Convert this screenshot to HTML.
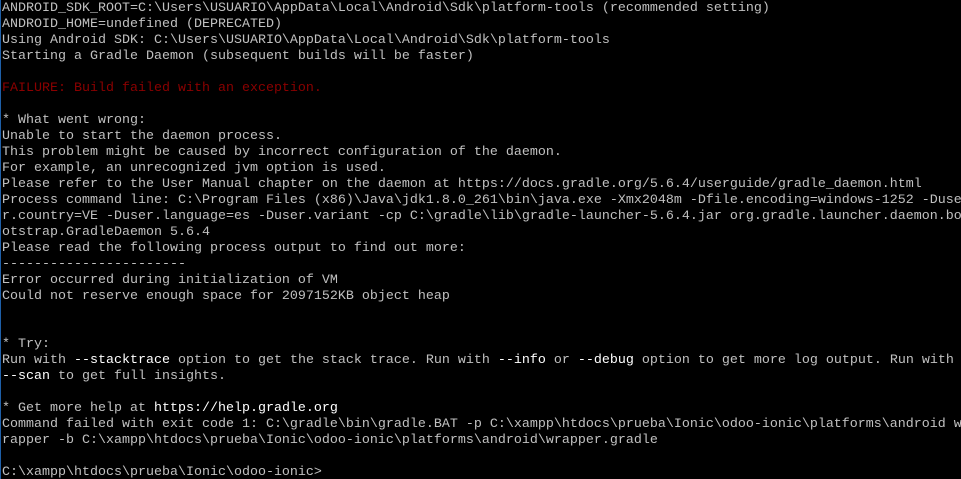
<!DOCTYPE html>
<html><head><meta charset="utf-8"><style>
html,body{margin:0;padding:0;background:#000;width:961px;height:479px;overflow:hidden}
body{border-left:1px solid #1e5fa8;box-sizing:border-box}
pre{margin:0;padding:1px 0 0 1px;font-family:"Liberation Mono",monospace;font-size:13.33px;line-height:16px;color:#c0c0c0;white-space:pre}
.r{color:#8b0000}
b{color:#fff;font-weight:normal}
</style></head><body><pre>ANDROID_SDK_ROOT=C:\Users\USUARIO\AppData\Local\Android\Sdk\platform-tools (recommended setting)
ANDROID_HOME=undefined (DEPRECATED)
Using Android SDK: C:\Users\USUARIO\AppData\Local\Android\Sdk\platform-tools
Starting a Gradle Daemon (subsequent builds will be faster)

<span class="r">FAILURE: Build failed with an exception.</span>

* What went wrong:
Unable to start the daemon process.
This problem might be caused by incorrect configuration of the daemon.
For example, an unrecognized jvm option is used.
Please refer to the User Manual chapter on the daemon at https://docs.gradle.org/5.6.4/userguide/gradle_daemon.html
Process command line: C:\Program Files (x86)\Java\jdk1.8.0_261\bin\java.exe -Xmx2048m -Dfile.encoding=windows-1252 -Duse
r.country=VE -Duser.language=es -Duser.variant -cp C:\gradle\lib\gradle-launcher-5.6.4.jar org.gradle.launcher.daemon.bo
otstrap.GradleDaemon 5.6.4
Please read the following process output to find out more:
-----------------------
Error occurred during initialization of VM
Could not reserve enough space for 2097152KB object heap


* Try:
Run with <b>--stacktrace</b> option to get the stack trace. Run with <b>--info</b> or <b>--debug</b> option to get more log output. Run with
<b>--scan</b> to get full insights.

* Get more help at <b>https://help.gradle.org</b>
Command failed with exit code 1: C:\gradle\bin\gradle.BAT -p C:\xampp\htdocs\prueba\Ionic\odoo-ionic\platforms\android w
rapper -b C:\xampp\htdocs\prueba\Ionic\odoo-ionic\platforms\android\wrapper.gradle

C:\xampp\htdocs\prueba\Ionic\odoo-ionic&gt;</pre></body></html>
